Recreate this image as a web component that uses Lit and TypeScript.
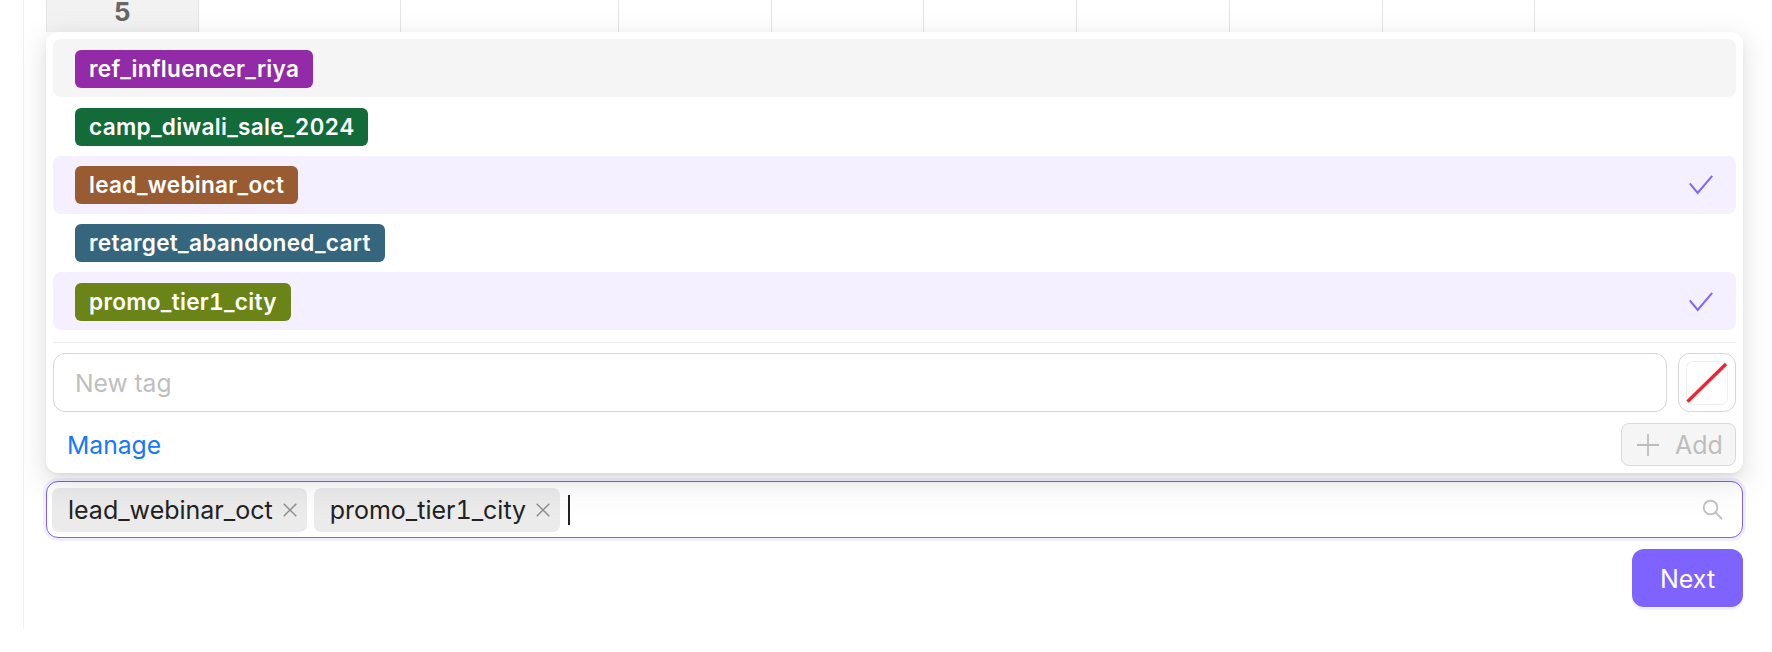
import { LitElement, html, css } from "lit";
import { customElement } from "lit/decorators.js";

const TAGS = [
  { name: "ref_influencer_riya", color: "#932aa8", state: "hover" },
  { name: "camp_diwali_sale_2024", color: "#126b38", state: "" },
  { name: "lead_webinar_oct", color: "#995b32", state: "selected" },
  { name: "retarget_abandoned_cart", color: "#36667d", state: "" },
  { name: "promo_tier1_city", color: "#6a8417", state: "selected" },
];
const CELLS = [153, 202, 218, 153, 152, 153, 153, 153, 152];

@customElement("app-root")
export class AppRoot extends LitElement {
  static styles = css`
    :host { display: block; width: 1772px; height: 652px; background: #fff; overflow: hidden;
      font-family: Inter, "Noto Sans", sans-serif; font-feature-settings: "tnum"; }
    .frame { margin-left: 23px; height: 629px; border-left: 1px solid #f0f0f0; padding: 0 29px 0 22px; box-sizing: border-box; }
    .grid { display: flex; height: 32px; }
    .cell { box-sizing: border-box; border-right: 1px solid #e4e4e4; height: 32px; }
    .cell.first { background: #f2f2f2; border-left: 1px solid #e4e4e4; display: flex; justify-content: center;
      align-items: flex-start; font-size: 26px; font-weight: 700; color: #666; line-height: 24px; }
    .popup { position: relative; z-index: 1; background: #fff; border-radius: 12px; padding: 7px 7px;
      height: 441px; box-sizing: border-box;
      box-shadow: 0 6px 18px rgba(0,0,0,.08), 0 3px 7px -4px rgba(0,0,0,.12), 0 10px 32px 9px rgba(0,0,0,.05); }
    .row { display: flex; align-items: center; justify-content: space-between; height: 58px; margin-bottom: .33px; border-radius: 8px; padding: 1px 23px 0 22px; box-sizing: border-box; }
    .row.hover { background: #f5f5f5; }
    .row.selected { background: #f4f0ff; }
    .tag { color: #fff; font-size: 22.6px; font-weight: 600; line-height: 38px; padding: 0 14px; border-radius: 6px; letter-spacing: .28px; }
    .check { width: 24px; height: 20px; display: block; }
    .divider { height: 1px; background: #f0f0f0; margin-top: 12px; }
    .create { display: flex; gap: 11px; margin-top: 10px; }
    .input { flex: 1; height: 59px; box-sizing: border-box; border: 1px solid #d6d6d6; border-radius: 12px; display: flex; align-items: center;
      padding-left: 21px; font-size: 24.7px; color: #bfbfbf; }
    .swatch-box { width: 58px; height: 59px; box-sizing: border-box; border: 1px solid #d6d6d6; border-radius: 12px; display: flex; align-items: center; justify-content: center; }
    .swatch { width: 42px; height: 44px; display: block; }
    .foot { display: flex; justify-content: space-between; align-items: center; margin-top: 11px; }
    .manage { font-size: 24.7px; color: #1677ff; padding-left: 14px; }
    .add { width: 115px; height: 43px; box-sizing: border-box; border: 1px solid #d9d9d9; border-radius: 8px; background: #f5f5f5; color: #bdbdbd;
      display: flex; align-items: center; gap: 16px; padding-left: 15px; font-size: 25px; }
    .add svg { width: 22px; height: 22px; }
    .field { margin-top: 8px; height: 57px; box-sizing: border-box; border: 1.5px solid #7a63ee; border-radius: 12px; box-shadow: 0 0 0 3px #f1eeff;
      display: flex; align-items: center; padding: 0 19px 0 5px; gap: 7px; background: #fff; }
    .chip { height: 44px; background: #ebebeb; border-radius: 7px; display: flex; align-items: center; padding: 0 10px 0 16px; gap: 10px;
      font-size: 25px; color: #222; }
    .chip svg { width: 14px; height: 14px; }
    .caret { width: 1.5px; height: 30px; background: #222; margin-left: 1px; }
    .search { width: 21px; height: 21px; margin-left: auto; }
    .actions { display: flex; justify-content: flex-end; margin-top: 11px; }
    .next { width: 111px; height: 58px; border-radius: 12px; background: #7f63ff; color: #fff; font-size: 25px; display: flex; align-items: center; justify-content: center;
      padding-top: 1px; box-sizing: border-box; box-shadow: 0 3px 0 #f3f0ff; }
  `;

  private check() {
    return html`<svg class="check" viewBox="0 0 24 20" fill="none" stroke="#7f63ff" stroke-width="2"><path d="M.7 8.3L8.7 18L23.2 .8"/></svg>`;
  }

  render() {
    return html`
      <div class="frame">
        <div class="grid">
          ${CELLS.map((w, i) =>
            html`<div class="cell ${i === 0 ? "first" : ""}" style="width:${w}px">${i === 0 ? "5" : ""}</div>`
          )}
        </div>
        <div class="popup">
          ${TAGS.map(
            (t) => html`<div class="row ${t.state}">
              <span class="tag" style="background:${t.color}">${t.name}</span>
              ${t.state === "selected" ? this.check() : ""}
            </div>`
          )}
          <div class="divider"></div>
          <div class="create">
            <div class="input">New tag</div>
            <div class="swatch-box">
              <svg class="swatch" viewBox="0 0 42 44" fill="none">
                <rect x=".5" y=".5" width="41" height="43" rx="6" stroke="#efefef"/>
                <path d="M1.5 40.6L40 3" stroke="#f5222d" stroke-width="3.4"/>
              </svg>
            </div>
          </div>
          <div class="foot">
            <span class="manage">Manage</span>
            <div class="add">
              <svg viewBox="0 0 22 22" fill="none" stroke="#bdbdbd" stroke-width="1.8"><path d="M11 0V22M0 11H22"/></svg>
              Add
            </div>
          </div>
        </div>
        <div class="field">
          ${["lead_webinar_oct", "promo_tier1_city"].map(
            (c) => html`<div class="chip">${c}
              <svg viewBox="0 0 14 14" fill="none" stroke="#8c8c8c" stroke-width="1.4"><path d="M.7 .7L13.3 13.3M13.3 .7L.7 13.3"/></svg>
            </div>`
          )}
          <div class="caret"></div>
          <svg class="search" viewBox="0 0 21 21" fill="none" stroke="#bfbfbf" stroke-width="1.8">
            <circle cx="8.5" cy="8.5" r="6.8"/><path d="M13.5 13.5L20 20"/>
          </svg>
        </div>
        <div class="actions"><div class="next">Next</div></div>
      </div>
    `;
  }
}
